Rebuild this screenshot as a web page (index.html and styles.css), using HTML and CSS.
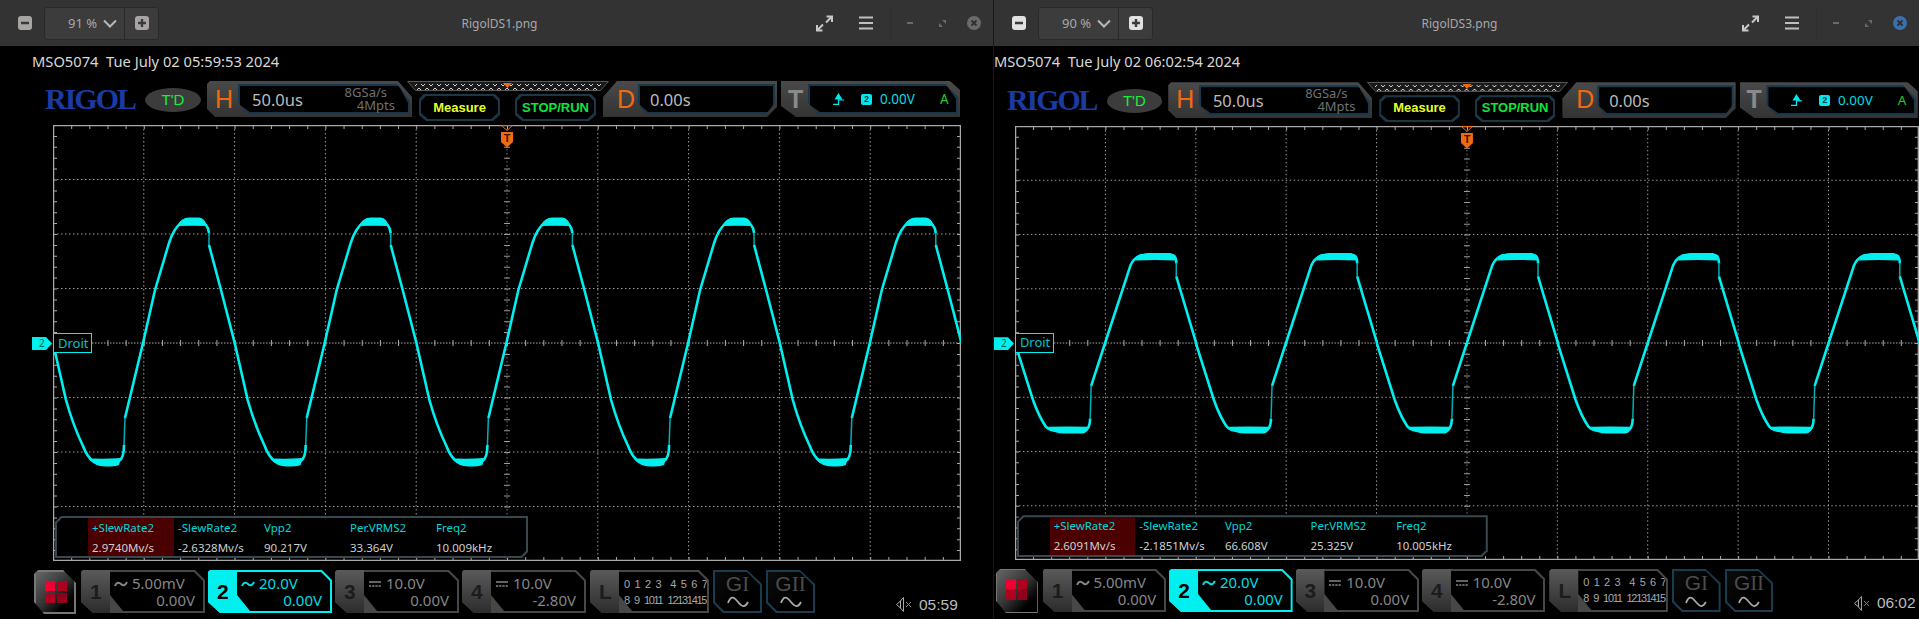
FILE: index.html
```html
<!DOCTYPE html>
<html lang="en">
  <head>
    <meta charset="UTF-8" />
    <title>RigolDS1.png / RigolDS3.png</title>
    <link rel="stylesheet" href="styles.css">
  </head>
  <body>
    <svg class="icon-defs" width="0" height="0" aria-hidden="true">
      <symbol id="i-minus" viewBox="0 0 14 14"><path d="M3 7h8" stroke="#3a3a3a" stroke-width="2.4"/></symbol>
      <symbol id="i-plus" viewBox="0 0 14 14"><path d="M3 7h8M7 3v8" stroke="#3a3a3a" stroke-width="2.4"/></symbol>
      <symbol id="i-chevron" viewBox="0 0 14 9"><path d="M1 1.500l6 6 6-6" fill="none" stroke="#b8b8b8" stroke-width="2"/></symbol>
      <symbol id="i-expand" viewBox="0 0 17 17"><path d="M10.500 1.500h5.500v5.500M16 1.500l-6 6M6.500 15.500h-5.500v-5.500M1 15.500l6-6" fill="none" stroke="#c8c8c8" stroke-width="2"/></symbol>
      <symbol id="i-menu" viewBox="0 0 14 14"><path d="M0 1.500h14M0 7h14M0 12.500h14" stroke="#c0c0c0" stroke-width="2"/></symbol>
      <symbol id="i-restore" viewBox="0 0 7 7"><path d="M3 0h4v4zM0 3l4 4h-4z" fill="#6a6a6a"/></symbol>
      <symbol id="i-x" viewBox="0 0 14 14"><path d="M4.500 4.500l5 5M9.500 4.500l-5 5" stroke="#2e2e2e" stroke-width="1.800"/></symbol>
      <symbol id="i-ac" viewBox="0 0 14 8"><path d="M1 6c1.500-4 4-4 6-2s4 2 6-2" fill="none" stroke="currentColor" stroke-width="2"/></symbol>
      <symbol id="i-dc" viewBox="0 0 14 8"><path d="M1 2h12" stroke="currentColor" stroke-width="1.600"/><path d="M1 6h12" stroke="currentColor" stroke-width="1.600" stroke-dasharray="2.200 1"/></symbol>
      <symbol id="i-sine" viewBox="0 0 22 12"><path d="M1 7c3-8 6-6 10-1s7 6 10 0" fill="none" stroke="#a8a8a8" stroke-width="1.800"/></symbol>
      <symbol id="i-speaker" viewBox="0 0 17 15"><path d="M.5 7.500l4-3.500v7zM4.500 4l3-3.500v14l-3-3.500M4.500 4v7" fill="none" stroke="#aaa"/><path d="M10 5l5 5M15 5l-5 5" stroke="#888"/></symbol>
      <symbol id="i-trig" viewBox="0 0 11 12"><path d="M5.500 0l4 6.500h-8z" fill="#00e8f0"/><path d="M5 7h6M5.500 7v4.400H0" fill="none" stroke="#00e8f0" stroke-width="1.200"/></symbol>
      <pattern id="zig" width="8" height="6" patternUnits="userSpaceOnUse"><path d="M0 5l4-4 4 4" fill="none" stroke="#d8d8d8"/></pattern>
      <symbol id="mem-bar" viewBox="0 0 202 10">
        <path d="M.5 .5h201l-8 9h-185z" fill="#1a1a1a" stroke="#585858"/>
        <rect x="8" y="3" width="186" height="6" fill="url(#zig)"/>
        <path d="M96 2h9l-4.500 5z" fill="#f06a10"/>
      </symbol>
      <g id="grat">
        <path d="M90.800 0V436M181.600 0V436M272.400 0V436M363.200 0V436M544.800 0V436M635.600 0V436M726.400 0V436M817.200 0V436" stroke="#9a9a9a" stroke-dasharray="1.500 2.500" fill="none"/>
        <path d="M454 0V436" stroke="#777" stroke-dasharray="1.500 2.500"/>
        <path d="M0 54.500H908M0 109H908M0 163.500H908M0 272.500H908M0 327H908M0 381.500H908" stroke="#9a9a9a" stroke-dasharray="1.500 2.500"/>
        <path d="M0 218H908" stroke="#aaa" stroke-dasharray="1.500 1.500"/>
        <path d="M0 218H908" stroke="#aaa" stroke-width="6" stroke-dasharray="1 17.160"/>
        <path d="M454 0V436" stroke="#999" stroke-width="6" stroke-dasharray="1 9.900"/>
        <path d="M0 2H908M0 434H908" stroke="#aaa" stroke-width="4" stroke-dasharray="1 17.160"/>
        <path d="M2 0V436M906 0V436" stroke="#aaa" stroke-width="4" stroke-dasharray="1 9.900"/>
        <rect x=".5" y=".5" width="907" height="435" fill="none" stroke="#a8a8a8" stroke-width="1.500"/>
      </g>
      <g id="wave-a" fill="none" stroke="#00f0f0" stroke-width="2.600" stroke-linejoin="round">
        <path d="M0 0L13 57Q20 82 30 103Q34 114 41 119L66 118Q71 115 71 102"/>
        <path d="M71 102L72 75" stroke="#00b0b4" stroke-width="1.500"/>
        <path d="M72 75L90 0L102-53L116-100Q121-115 128-120Q132-122 138-122H146Q155-120 156-110"/>
        <path d="M156-110V-98" stroke="#00b0b4" stroke-width="1.500"/>
        <path d="M156-98L168-53L181.700 0"/>
        <path d="M36 116Q42 123.500 52 123.500T66 122L68 115Q52 116 41 115.500ZM124-117Q128-125.500 136-125.500H146Q152-125 154-117Q140-117.500 124-117Z" fill="#00f0f0" stroke="none"/>
      </g>
      <g id="wave-b" fill="none" stroke="#00f0f0" stroke-width="2.600" stroke-linejoin="round">
        <path d="M0 0L18 57Q24 74 31 84Q35 88 40 88H70Q75 87 75.500 76"/>
        <path d="M75.500 76L76.500 43" stroke="#00b0b4" stroke-width="1.500"/>
        <path d="M76.500 43L90.500 0L116-78Q119-85 126-88H159Q162-87 162-80"/>
        <path d="M162-80V-67" stroke="#00b0b4" stroke-width="1.500"/>
        <path d="M162-67L182 0"/>
        <path d="M33 84Q38 91 50 91H68Q73 90 74 84Q52 83.500 33 84ZM121-83Q125-90.500 134-90.500H156Q161-90 161-83Q140-84 121-83Z" fill="#00f0f0" stroke="none"/>
      </g>
    </svg>

    <div class="desktop">
      <section class="viewer viewer-a">
        <header class="titlebar">
          <div class="tb-left">
            <svg class="tb-btn"><use href="#i-minus"/></svg>
            <div class="combo">
              <div class="combo-val">91 %<svg class="chev"><use href="#i-chevron"/></svg></div>
              <div class="combo-plus"><svg class="tb-btn"><use href="#i-plus"/></svg></div>
            </div>
          </div>
          <div class="tb-title">RigolDS1.png</div>
          <div class="tb-right">
            <svg class="tb-expand"><use href="#i-expand"/></svg>
            <svg class="tb-menu"><use href="#i-menu"/></svg>
            <span class="tb-sep"></span>
            <span class="tb-min"></span>
            <svg class="tb-restore"><use href="#i-restore"/></svg>
            <span class="tb-close"><svg><use href="#i-x"/></svg></span>
          </div>
        </header>
        <div class="scope">
          <div class="status">MSO5074&nbsp; Tue July 02 05:59:53 2024</div>
          <div class="topbar">
            <div class="logo">RIGOL</div>
            <div class="td">T'D</div>
            <div class="panel h-panel">
              <span class="letter orange">H</span>
              <div class="field h-field">
                <span class="field-val">50.0us</span>
                <span class="rate"><span class="rate-a">8GSa/s</span><span>4Mpts</span></span>
              </div>
            </div>
            <div class="mid">
              <svg class="mem"><use href="#mem-bar"/></svg>
              <div class="mid-btns">
                <div class="soft soft-y">Measure</div>
                <div class="soft soft-g">STOP/RUN</div>
              </div>
            </div>
            <div class="panel d-panel">
              <span class="letter orange">D</span>
              <div class="field d-field"><span class="field-val">0.00s</span></div>
            </div>
            <div class="panel t-panel">
              <span class="letter grey">T</span>
              <div class="field t-field">
                <svg class="trig"><use href="#i-trig"/></svg>
                <span class="ch-badge">2</span>
                <span class="trig-val">0.00V</span>
                <span class="trig-mode">A</span>
              </div>
            </div>
          </div>
          <div class="screen">
            <svg class="grid" viewBox="0 0 908 436">
              <use href="#grat"/>
              <use href="#wave-a" x="0" y="218"/>
              <use href="#wave-a" x="181.700" y="218"/>
              <use href="#wave-a" x="363.400" y="218"/>
              <use href="#wave-a" x="545.100" y="218"/>
              <use href="#wave-a" x="726.800" y="218"/>
            </svg>
            <div class="trig-mark">
              <svg viewBox="0 0 14 23"><path d="M1.500 .5h11l-5.500 5z" fill="none" stroke="#f06a10"/><path d="M1 7h12v10l-6 5.500-6-5.500z" fill="#f06a10"/><text x="7" y="17" text-anchor="middle">T</text></svg>
            </div>
            <div class="ch-tag">2</div>
            <div class="ch-label">Droit</div>
            <div class="meas">
              <div class="meas-in">
                <div class="meas-cell meas-sel"><span class="m-name">+SlewRate2</span><span>2.9740Mv/s</span></div>
                <div class="meas-cell"><span class="m-name">-SlewRate2</span><span>-2.6328Mv/s</span></div>
                <div class="meas-cell"><span class="m-name">Vpp2</span><span>90.217V</span></div>
                <div class="meas-cell"><span class="m-name">Per.VRMS2</span><span>33.364V</span></div>
                <div class="meas-cell"><span class="m-name">Freq2</span><span>10.009kHz</span></div>
              </div>
            </div>
          </div>
          <div class="bottombar">
            <div class="home"><div class="home-grid"><i></i><i></i><i></i><i></i></div></div>
            <div class="chan">
              <div class="chan-num">1</div>
              <div class="chan-body"><div class="chan-line"><svg class="wave-ic"><use href="#i-ac"/></svg>5.00mV</div><div class="chan-offs">0.00V</div></div>
            </div>
            <div class="chan chan-on">
              <div class="chan-num">2</div>
              <div class="chan-body"><div class="chan-line"><svg class="wave-ic"><use href="#i-ac"/></svg>20.0V</div><div class="chan-offs">0.00V</div></div>
            </div>
            <div class="chan">
              <div class="chan-num">3</div>
              <div class="chan-body"><div class="chan-line"><svg class="wave-ic"><use href="#i-dc"/></svg>10.0V</div><div class="chan-offs">0.00V</div></div>
            </div>
            <div class="chan">
              <div class="chan-num">4</div>
              <div class="chan-body"><div class="chan-line"><svg class="wave-ic"><use href="#i-dc"/></svg>10.0V</div><div class="chan-offs">-2.80V</div></div>
            </div>
            <div class="chan chan-l">
              <div class="chan-num">L</div>
              <div class="chan-body"><div class="bits">0 1 2 3  4 5 6 7</div><div class="bits bits-b">8 9 1011 12131415</div></div>
            </div>
            <div class="gen"><div class="gen-in"><div class="gen-name">G<span>I</span></div><svg class="sine"><use href="#i-sine"/></svg></div></div>
            <div class="gen"><div class="gen-in"><div class="gen-name">G<span>II</span></div><svg class="sine"><use href="#i-sine"/></svg></div></div>
            <div class="clock"><svg class="speaker"><use href="#i-speaker"/></svg><span>05:59</span></div>
          </div>
        </div>
      </section>

      <section class="viewer viewer-b">
        <header class="titlebar">
          <div class="tb-left">
            <svg class="tb-btn tb-lit"><use href="#i-minus"/></svg>
            <div class="combo">
              <div class="combo-val">90 %<svg class="chev"><use href="#i-chevron"/></svg></div>
              <div class="combo-plus"><svg class="tb-btn tb-lit"><use href="#i-plus"/></svg></div>
            </div>
          </div>
          <div class="tb-title">RigolDS3.png</div>
          <div class="tb-right">
            <svg class="tb-expand"><use href="#i-expand"/></svg>
            <svg class="tb-menu"><use href="#i-menu"/></svg>
            <span class="tb-sep"></span>
            <span class="tb-min"></span>
            <svg class="tb-restore"><use href="#i-restore"/></svg>
            <span class="tb-close tb-close-on"><svg><use href="#i-x"/></svg></span>
          </div>
        </header>
        <div class="scope">
          <div class="status">MSO5074&nbsp; Tue July 02 06:02:54 2024</div>
          <div class="topbar">
            <div class="logo">RIGOL</div>
            <div class="td">T'D</div>
            <div class="panel h-panel">
              <span class="letter orange">H</span>
              <div class="field h-field">
                <span class="field-val">50.0us</span>
                <span class="rate"><span class="rate-a">8GSa/s</span><span>4Mpts</span></span>
              </div>
            </div>
            <div class="mid">
              <svg class="mem"><use href="#mem-bar"/></svg>
              <div class="mid-btns">
                <div class="soft soft-y">Measure</div>
                <div class="soft soft-g">STOP/RUN</div>
              </div>
            </div>
            <div class="panel d-panel">
              <span class="letter orange">D</span>
              <div class="field d-field"><span class="field-val">0.00s</span></div>
            </div>
            <div class="panel t-panel">
              <span class="letter grey">T</span>
              <div class="field t-field">
                <svg class="trig"><use href="#i-trig"/></svg>
                <span class="ch-badge">2</span>
                <span class="trig-val">0.00V</span>
                <span class="trig-mode">A</span>
              </div>
            </div>
          </div>
          <div class="screen">
            <svg class="grid" viewBox="0 0 908 436">
              <use href="#grat"/>
              <use href="#wave-b" x="0" y="218"/>
              <use href="#wave-b" x="181.700" y="218"/>
              <use href="#wave-b" x="363.400" y="218"/>
              <use href="#wave-b" x="545.100" y="218"/>
              <use href="#wave-b" x="726.800" y="218"/>
            </svg>
            <div class="trig-mark">
              <svg viewBox="0 0 14 23"><path d="M1.500 .5h11l-5.500 5z" fill="none" stroke="#f06a10"/><path d="M1 7h12v10l-6 5.500-6-5.500z" fill="#f06a10"/><text x="7" y="17" text-anchor="middle">T</text></svg>
            </div>
            <div class="ch-tag">2</div>
            <div class="ch-label">Droit</div>
            <div class="meas">
              <div class="meas-in">
                <div class="meas-cell meas-sel"><span class="m-name">+SlewRate2</span><span>2.6091Mv/s</span></div>
                <div class="meas-cell"><span class="m-name">-SlewRate2</span><span>-2.1851Mv/s</span></div>
                <div class="meas-cell"><span class="m-name">Vpp2</span><span>66.608V</span></div>
                <div class="meas-cell"><span class="m-name">Per.VRMS2</span><span>25.325V</span></div>
                <div class="meas-cell"><span class="m-name">Freq2</span><span>10.005kHz</span></div>
              </div>
            </div>
          </div>
          <div class="bottombar">
            <div class="home"><div class="home-grid"><i></i><i></i><i></i><i></i></div></div>
            <div class="chan">
              <div class="chan-num">1</div>
              <div class="chan-body"><div class="chan-line"><svg class="wave-ic"><use href="#i-ac"/></svg>5.00mV</div><div class="chan-offs">0.00V</div></div>
            </div>
            <div class="chan chan-on">
              <div class="chan-num">2</div>
              <div class="chan-body"><div class="chan-line"><svg class="wave-ic"><use href="#i-ac"/></svg>20.0V</div><div class="chan-offs">0.00V</div></div>
            </div>
            <div class="chan">
              <div class="chan-num">3</div>
              <div class="chan-body"><div class="chan-line"><svg class="wave-ic"><use href="#i-dc"/></svg>10.0V</div><div class="chan-offs">0.00V</div></div>
            </div>
            <div class="chan">
              <div class="chan-num">4</div>
              <div class="chan-body"><div class="chan-line"><svg class="wave-ic"><use href="#i-dc"/></svg>10.0V</div><div class="chan-offs">-2.80V</div></div>
            </div>
            <div class="chan chan-l">
              <div class="chan-num">L</div>
              <div class="chan-body"><div class="bits">0 1 2 3  4 5 6 7</div><div class="bits bits-b">8 9 1011 12131415</div></div>
            </div>
            <div class="gen"><div class="gen-in"><div class="gen-name">G<span>I</span></div><svg class="sine"><use href="#i-sine"/></svg></div></div>
            <div class="gen"><div class="gen-in"><div class="gen-name">G<span>II</span></div><svg class="sine"><use href="#i-sine"/></svg></div></div>
            <div class="clock"><svg class="speaker"><use href="#i-speaker"/></svg><span>06:02</span></div>
          </div>
        </div>
      </section>
    </div>
  </body>
</html>
```

FILE: styles.css
```css
:root {
  --bar: #333333;
  --orange: #f06a10;
  --cyan: #00f0f0;
  --panel-edge: #17384c;
}

* {
  box-sizing: border-box;
}

html,
body {
  margin: 0;
  height: 100%;
  background: #000;
  overflow: hidden;
}

body {
  font-family: "Noto Sans", sans-serif;
}

.icon-defs {
  display: block;
  height: 0;
}

.desktop {
  display: flex;
  height: 619px;
}

.viewer {
  height: 619px;
  overflow: hidden;
  flex: none;
}

.viewer-a {
  width: 994px;
  border-right: 1px solid #181818;
}

.viewer-b {
  width: 925px;
}

/* window title bar */
.titlebar {
  display: grid;
  grid-template-columns: 1fr auto 1fr;
  align-items: center;
  height: 46px;
  background: var(--bar);
  padding: 0 12px 0 18px;
}

.tb-left {
  display: flex;
  align-items: center;
  gap: 12px;
}

.tb-btn {
  width: 14px;
  height: 14px;
  background: #a8a4a4;
  border-radius: 3px;
  display: block;
}

.tb-lit {
  background: #e2e2e2;
}

.combo {
  display: flex;
  height: 33px;
  width: 115px;
  background: #3c3c3c;
  border: 1px solid #292929;
  border-radius: 3px;
}

.combo-val {
  width: 80px;
  display: flex;
  align-items: center;
  padding-left: 23px;
  font-size: 13px;
  color: #a8a8a8;
  border-right: 1px solid #292929;
}

.chev {
  width: 14px;
  height: 9px;
  margin-left: 6px;
}

.combo-plus {
  flex: 1;
  display: flex;
  align-items: center;
  justify-content: center;
}

.tb-title {
  font-size: 12px;
  color: #a8a8a8;
}

.tb-right {
  display: flex;
  align-items: center;
  justify-content: flex-end;
}

.tb-expand {
  width: 17px;
  height: 17px;
}

.tb-menu {
  width: 14px;
  height: 14px;
  margin-left: 26px;
}

.tb-sep {
  width: 1px;
  height: 34px;
  background: #2e2e2e;
  margin-left: 17px;
}

.tb-min {
  width: 6px;
  height: 2px;
  background: #6a6a6a;
  margin-left: 16px;
}

.tb-restore {
  width: 7px;
  height: 7px;
  margin-left: 26px;
}

.tb-close {
  width: 14px;
  height: 14px;
  margin-left: 21px;
  border-radius: 50%;
  background: #6a6a6a;
}

.tb-close svg {
  width: 14px;
  height: 14px;
  display: block;
}

.tb-close-on {
  background: #3b70ac;
}

/* oscilloscope picture */
.scope {
  width: 1000px;
  height: 573px;
  background: #000;
  padding-top: 5px;
}

.viewer-b .scope {
  zoom: 0.9955;
  margin-left: -32px;
  padding-top: 6.500px;
}

.status {
  height: 20px;
  line-height: 20px;
  margin-left: 32px;
  font-size: 14.700px;
  color: #d8d8d8;
  white-space: nowrap;
}

.topbar {
  display: flex;
  align-items: flex-start;
  height: 40px;
  margin-top: 10px;
  padding-left: 45px;
}

.logo {
  width: 90px;
  margin-top: 5px;
  font-family: "Liberation Serif", serif;
  font-weight: bold;
  font-size: 30px;
  line-height: 26px;
  letter-spacing: -2px;
  color: #1a3aa4;
}

.td {
  width: 56px;
  height: 24px;
  margin: 7px 6px 0 10px;
  border-radius: 50%;
  background: #3c3c3c;
  color: #16ee3c;
  font-family: "Liberation Sans", sans-serif;
  font-size: 15px;
  line-height: 24px;
  text-align: center;
}

.panel {
  height: 36px;
  display: flex;
  justify-content: space-between;
  background: linear-gradient(#4a4a4a, #333);
}

.letter {
  font-family: "Liberation Sans", sans-serif;
  font-size: 25px;
  line-height: 36px;
}

.orange {
  color: var(--orange);
}

.grey {
  color: #8a8a8a;
  font-weight: bold;
}

.field {
  position: relative;
  height: 30px;
  margin: 3px 2px 0 0;
  display: flex;
  align-items: center;
  background: var(--panel-edge);
}

.field::before {
  content: "";
  position: absolute;
  inset: 2px;
  background: #000;
  clip-path: inherit;
}

.field > * {
  position: relative;
}

.field-val {
  font-size: 16.500px;
  color: #bcbcbc;
}

.h-panel {
  width: 205px;
  padding-left: 8px;
  clip-path: polygon(0 3px, 3px 0, 191px 0, 100% 16px, 100% 100%, 8px 100%, 0 28px);
}

.h-field {
  width: 172px;
  padding-left: 14px;
  justify-content: space-between;
  clip-path: polygon(0 0, 159px 0, 100% 17px, 100% 100%, 10px 100%, 0 19px);
}

.rate {
  display: flex;
  flex-direction: column;
  align-items: flex-end;
  padding-right: 15px;
  font-size: 13px;
  line-height: 13px;
  color: #707070;
}

.rate-a {
  padding-right: 8px;
}

.mid {
  width: 202px;
  margin-left: -5px;
  flex: none;
}

.mem {
  display: block;
  width: 202px;
  height: 10px;
}

.mid-btns {
  display: flex;
  gap: 15px;
  margin-top: 3px;
  padding-left: 12px;
}

.soft {
  position: relative;
  width: 81px;
  height: 27px;
  line-height: 27px;
  background: #1c3644;
  text-align: center;
  font-family: "Liberation Sans", sans-serif;
  font-weight: bold;
  font-size: 13px;
  clip-path: polygon(5px 0, calc(100% - 5px) 0, 100% 5px, 100% calc(100% - 6px), calc(100% - 7px) 100%, 7px 100%, 0 calc(100% - 6px), 0 5px);
}

.soft::before {
  content: "";
  position: absolute;
  inset: 2px;
  background: #000;
  clip-path: inherit;
  z-index: -1;
}

.soft-y {
  color: #e4ff2c;
}

.soft-g {
  color: #10e43c;
}

.d-panel {
  width: 174px;
  margin-left: -6px;
  padding-left: 14px;
  clip-path: polygon(14px 0, 100% 0, 100% 26px, 164px 100%, 0 100%, 0 16px);
}

.d-field {
  width: 137px;
  padding-left: 12px;
  clip-path: polygon(0 0, 100% 0, 100% 19px, 128px 100%, 8px 100%, 0 19px);
}

.t-panel {
  width: 179px;
  margin-left: 4px;
  padding-left: 7px;
  clip-path: polygon(0 0, 169px 0, 100% 9px, 100% 100%, 15px 100%, 0 25px);
}

.t-field {
  width: 150px;
  clip-path: polygon(0 0, 137px 0, 100% 13px, 100% 100%, 10px 100%, 0 19px);
}

.trig {
  width: 11px;
  height: 12px;
  margin-left: 25px;
}

.ch-badge {
  width: 11px;
  height: 11px;
  margin-left: 17px;
  border-radius: 2px;
  background: #00e8f0;
  color: #06343a;
  font-family: "Liberation Sans", sans-serif;
  font-weight: bold;
  font-size: 9px;
  line-height: 11px;
  text-align: center;
}

.trig-val {
  margin-left: 8px;
  font-size: 13.500px;
  color: #00dce4;
}

.trig-mode {
  margin-left: 25px;
  font-size: 13.500px;
  color: #22cc2c;
}

.screen {
  position: relative;
  width: 908px;
  height: 436px;
  margin: 4px 0 0 53px;
}

.grid {
  display: block;
  width: 908px;
  height: 436px;
}

.trig-mark {
  position: absolute;
  left: 447px;
  top: 0;
  width: 14px;
  height: 23px;
}

.trig-mark svg {
  display: block;
  width: 14px;
  height: 23px;
}

.trig-mark text {
  font-family: "Liberation Sans", sans-serif;
  font-weight: bold;
  font-size: 11px;
  fill: #3a1800;
}

.ch-tag {
  position: absolute;
  left: -21px;
  top: 212px;
  width: 20px;
  height: 13px;
  background: var(--cyan);
  clip-path: polygon(0 0, 14px 0, 100% 50%, 14px 100%, 0 100%);
  color: #064;
  font-size: 10px;
  line-height: 13px;
  padding-left: 7px;
}

.ch-label {
  position: absolute;
  left: 0;
  top: 208px;
  width: 39px;
  height: 20px;
  background: #000;
  border: 1px solid var(--cyan);
  color: #00c4c8;
  font-size: 13px;
  line-height: 18px;
  padding-left: 4px;
}

.meas {
  position: absolute;
  left: 2px;
  top: 391px;
  width: 473px;
  height: 42px;
  background: #39484e;
  clip-path: polygon(6px 0, 100% 0, 100% calc(100% - 6px), calc(100% - 6px) 100%, 0 100%, 0 6px);
}

.meas-in {
  height: 38px;
  margin: 2px;
  display: grid;
  grid-template-columns: repeat(5, 86px);
  padding-left: 31px;
  background: #000;
  clip-path: polygon(5px 0, 100% 0, 100% calc(100% - 5px), calc(100% - 5px) 100%, 0 100%, 0 5px);
}

.meas-cell {
  display: flex;
  flex-direction: column;
  gap: 3px;
  padding: 1px 0 0 4px;
  font-size: 11.500px;
  line-height: 17px;
  color: #cfcfcf;
  white-space: nowrap;
}

.m-name {
  color: #00d8dc;
}

.meas-sel {
  background: #4a0000;
}

.bottombar {
  display: flex;
  gap: 3px;
  height: 43px;
  margin-top: 9px;
  padding-left: 34px;
}

.home {
  width: 42px;
  height: 44px;
  margin-right: 2px;
  padding: 9px 0 0 9px;
  background: linear-gradient(135deg, #666 0%, #333 50%, #000 80%);
  border: 2px solid #777;
  clip-path: polygon(4px 0, 29px 0, 100% 13px, 100% 100%, 10px 100%, 0 32px, 0 4px);
}

.home-grid {
  display: grid;
  grid-template-columns: 10px 10px;
  grid-auto-rows: 10px;
  gap: 1.500px;
}

.home-grid i {
  background: #b00020;
}

.home-grid i:first-child {
  background: #f00030;
}

.home-grid i:last-child {
  background: #90001a;
}

.chan {
  position: relative;
  display: flex;
  width: 124px;
  height: 43px;
  background: #474747;
  clip-path: polygon(2px 0, calc(100% - 10px) 0, 100% 10px, 100% 100%, 12px 100%, 0 32px, 0 2px);
}

.chan-num {
  flex: none;
  width: 29px;
  padding-left: 9px;
  background: linear-gradient(#5a5a5a, #2c2c2c);
  color: #1c1c1c;
  font-family: "Liberation Sans", sans-serif;
  font-weight: bold;
  font-size: 21px;
  line-height: 44px;
}

.chan-body {
  flex: 1;
  min-width: 0;
  margin: 2px 2px 2px 0;
  padding: 3px 8px 0 3px;
  background: #000;
  color: #868686;
  font-size: 15px;
  line-height: 17px;
  clip-path: polygon(0 0, calc(100% - 9px) 0, 100% 9px, 100% 100%, 13px 100%, 0 23px);
}

.chan-line {
  display: flex;
  align-items: center;
}

.wave-ic {
  width: 14px;
  height: 8px;
  margin: 0 4px 0 1px;
}

.chan-offs {
  text-align: right;
}

.chan-on {
  background: var(--cyan);
}

.chan-on .chan-num {
  background: var(--cyan);
  color: #000;
}

.chan-on .chan-body {
  color: #00dce4;
}

.chan-l {
  width: 119px;
  margin-left: 1px;
}

.chan-l .chan-body {
  padding: 4px 0 0 5px;
  color: #a8a8a8;
}

.bits {
  font-family: "Liberation Sans", sans-serif;
  font-size: 11px;
  line-height: 16px;
  word-spacing: 1.300px;
  white-space: pre;
}

.bits-b {
  letter-spacing: -1.300px;
  word-spacing: 3.400px;
}

.gen {
  width: 49px;
  height: 43px;
  margin-left: 1px;
  background: #1b3c4e;
  clip-path: polygon(0 0, 34px 0, 100% 14px, 100% 100%, 10px 100%, 0 33px);
}

.gen-in {
  height: 39px;
  margin: 2px;
  display: flex;
  flex-direction: column;
  align-items: center;
  background: linear-gradient(135deg, #0c0c0c, #000 60%);
  clip-path: polygon(0 0, 32px 0, 100% 13px, 100% 100%, 9px 100%, 0 30px);
}

.gen-name {
  font-family: "Liberation Sans", sans-serif;
  font-size: 21px;
  line-height: 24px;
  color: #4c4c4c;
}

.gen-name span {
  font-family: "Liberation Serif", serif;
}

.sine {
  width: 22px;
  height: 12px;
}

.clock {
  display: flex;
  align-items: center;
  gap: 6px;
  height: 17px;
  align-self: flex-end;
  margin-left: 78px;
  font-family: "Liberation Sans", sans-serif;
  font-size: 15.500px;
  color: #bcbcbc;
}

.speaker {
  width: 17px;
  height: 15px;
}
```
